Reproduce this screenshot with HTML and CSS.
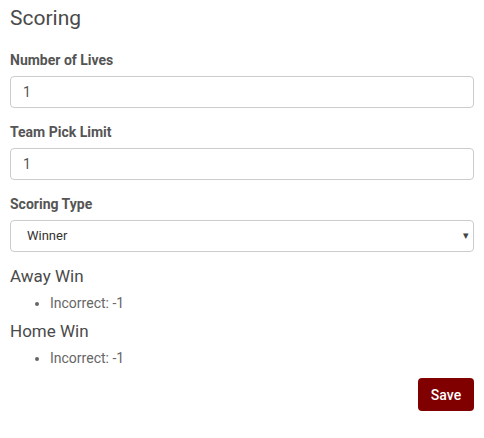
FILE: index.html
```html
<!DOCTYPE html>
<html>
<head>
<meta charset="utf-8">
<link rel="stylesheet" href="styles.css">
</head>
<body>
<div class="panel">
  <h2 class="title">Scoring</h2>
  <div class="field">
    <label class="label">Number of Lives</label>
    <div class="input">1</div>
  </div>
  <div class="field">
    <label class="label">Team Pick Limit</label>
    <div class="input">1</div>
  </div>
  <div class="field">
    <label class="label">Scoring Type</label>
    <div class="input select"><span>Winner</span><span class="caret">&#9662;</span></div>
  </div>
  <div class="results">
    <h3 class="sub">Away Win</h3>
    <ul class="list"><li>Incorrect: -1</li></ul>
    <h3 class="sub">Home Win</h3>
    <ul class="list"><li>Incorrect: -1</li></ul>
  </div>
  <div class="actions"><button class="save">Save</button></div>
</div>
</body>
</html>
```
FILE: styles.css
```css
html, body { margin: 0; padding: 0; background: #fff; }
body { font-family: Roboto, "Liberation Sans", sans-serif; color: #555; }
.panel { padding: 0 10px; }
.title { font-size: 21px; font-weight: 400; margin: 0 0 5px; padding-top: 5px; line-height: 26px; color: #4a4a4a; }
.field { display: flex; flex-direction: column; }
.label { font-size: 14px; font-weight: 700; color: #555; margin-top: 15px; line-height: 18px; margin-bottom: 7px; }
.input { height: 32px; box-sizing: border-box; border: 1px solid #ccc; border-radius: 4px; padding: 0 12px; font-size: 14px; line-height: 30px; color: #555; display: flex; align-items: center; }
.select { justify-content: space-between; font-size: 13px; padding: 0 4px 0 16px; color: #333; }
.caret { font-size: 11px; color: #444; }
.results { margin-top: 13px; }
.sub { font-size: 17px; font-weight: 400; margin: 7px 0 0; line-height: 22px; color: #4a4a4a; }
.sub:first-child { margin-top: 0; }
.list { margin: 6px 0 0; padding-left: 40px; font-size: 14px; line-height: 20px; color: #666; }
.actions { display: flex; justify-content: flex-end; margin-top: 10px; }
.save { background: #800000; color: #fff; border: 0; border-radius: 4px; font-family: Roboto, sans-serif; font-size: 14px; font-weight: 500; width: 56px; height: 33px; padding: 0; }
```
